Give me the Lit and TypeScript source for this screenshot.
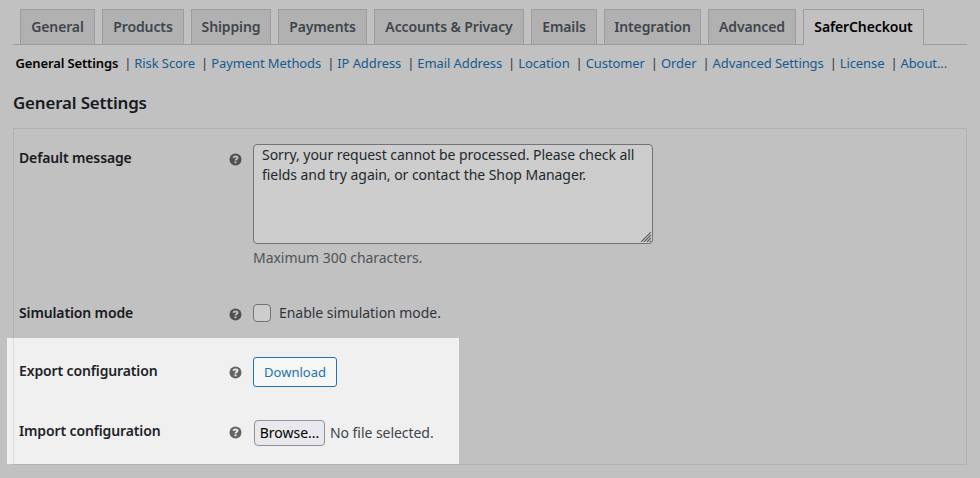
import { LitElement, html, css } from "lit";
import { customElement, property } from "lit/decorators.js";
import { classMap } from "lit/directives/class-map.js";
import { styleMap } from "lit/directives/style-map.js";

const tabs: [string, number][] = [
  ["General", 75],
  ["Products", 82],
  ["Shipping", 80],
  ["Payments", 89],
  ["Accounts & Privacy", 150],
  ["Emails", 66],
  ["Integration", 97],
  ["Advanced", 88],
  ["SaferCheckout", 121],
];

const sections = [
  "General Settings",
  "Risk Score",
  "Payment Methods",
  "IP Address",
  "Email Address",
  "Location",
  "Customer",
  "Order",
  "Advanced Settings",
  "License",
  "About...",
];

@customElement("help-tip")
class HelpTip extends LitElement {
  static styles = css`
    :host {
      display: block;
      width: 13px;
      height: 13px;
    }
    svg {
      display: block;
    }
  `;
  render() {
    return html`<svg width="13" height="13" viewBox="0 0 13 13">
      <circle cx="6.5" cy="6.5" r="6" fill="#646464" />
      <path d="M4.4 4.9C4.6 3.8 5.4 3.4 6.5 3.4C7.8 3.4 8.5 4 8.5 4.8C8.5 6 6.5 6 6.5 7.6" fill="none" stroke="#f0f0f1" stroke-width="1.9" />
      <rect x="5.5" y="8.4" width="2" height="1.8" fill="#f0f0f1" />
    </svg>`;
  }
}

@customElement("setting-row")
class SettingRow extends LitElement {
  @property() label = "";
  static styles = css`
    :host {
      display: grid;
      grid-template-columns: 210px 24px 1fr;
      align-items: start;
    }
    .label {
      font-weight: 600;
      line-height: 20px;
      letter-spacing: -0.13px;
      color: #1d2327;
      padding-top: 4px;
    }
    help-tip {
      margin-top: 9px;
    }
  `;
  render() {
    return html`<div class="label">${this.label}</div>
      <help-tip></help-tip>
      <slot></slot>`;
  }
}

@customElement("app-root")
class AppRoot extends LitElement {
  static styles = css`
    :host {
      display: block;
      position: relative;
      box-sizing: border-box;
      height: 478px;
      padding: 9px 13px 0;
      overflow: hidden;
      background: #f0f0f1;
      color: #3c434a;
      font: 14px/20px "Noto Sans", "Open Sans", sans-serif;
    }
    * {
      box-sizing: border-box;
    }
    .tabs {
      display: flex;
      gap: 7px;
      height: 36px;
      padding-left: 7px;
      border-bottom: 1px solid #c3c4c7;
    }
    .tab {
      flex: none;
      height: 35px;
      border: 1px solid #c3c4c7;
      border-bottom: 0;
      background: #dcdcde;
      color: #50575e;
      font-weight: 600;
      letter-spacing: -0.12px;
      line-height: 34px;
      text-align: center;
      white-space: nowrap;
    }
    .tab.active {
      height: 36px;
      background: #f0f0f1;
      color: #000;
    }
    .sections {
      display: flex;
      margin: 8px 0 0 2.5px;
      font-size: 13px;
      line-height: 20px;
      letter-spacing: -0.09px;
      white-space: nowrap;
    }
    .sections a {
      color: #2271b1;
    }
    .sections a.current {
      color: #000;
      font-weight: 600;
      letter-spacing: -0.13px;
    }
    .sep {
      margin: 0 3px 0 6px;
    }
    h2 {
      margin: 18px 0 0;
      color: #1d2327;
      font-size: 16.9px;
      font-weight: 600;
      letter-spacing: -0.15px;
      line-height: 24px;
    }
    .panel {
      height: 337px;
      margin-top: 13px;
      padding: 15px 5px 0;
      border: 1px solid #dcdcde;
    }
    .message {
      height: 155px;
    }
    .simulation {
      height: 58px;
    }
    .export {
      height: 60px;
    }
    .field {
      position: relative;
      width: 400px;
    }
    .grip {
      position: absolute;
      right: 2px;
      bottom: 2px;
    }
    textarea {
      display: block;
      width: 400px;
      height: 100px;
      margin: 0;
      padding: 0 8px;
      border: 1px solid #8c8f94;
      border-radius: 4px;
      background: #fff;
      color: #2c3338;
      font: inherit;
      letter-spacing: -0.05px;
      overflow: hidden;
      resize: none;
    }
    .hint {
      margin-top: 4px;
      color: #646970;
      letter-spacing: -0.04px;
    }
    .check {
      display: flex;
      align-items: center;
      gap: 8px;
      height: 28px;
      letter-spacing: -0.04px;
    }
    .box {
      width: 18px;
      height: 18px;
      border: 1px solid #8c8f94;
      border-radius: 4px;
      background: #fff;
    }
    .download {
      width: 84px;
      height: 30px;
      padding: 0;
      border: 1px solid #2271b1;
      border-radius: 3px;
      background: #f6f7f7;
      color: #2271b1;
      font: inherit;
      font-size: 13px;
    }
    .file {
      display: flex;
      align-items: center;
      gap: 5px;
      padding: 3px 0 0 1px;
      letter-spacing: -0.05px;
    }
    .browse {
      width: 71px;
      height: 26px;
      padding: 0;
      border: 1px solid #8f8f9d;
      border-radius: 4px;
      background: #e9e9ed;
      color: #000;
      font: inherit;
    }
    .spotlight {
      position: absolute;
      left: 7px;
      top: 338px;
      width: 452px;
      height: 126px;
      box-shadow: 0 0 0 1000px rgba(0, 0, 0, 0.195);
      pointer-events: none;
    }
  `;

  render() {
    return html`
      <nav class="tabs">
        ${tabs.map(
          ([name, width], i) => html`<div
            class=${classMap({ tab: true, active: i === tabs.length - 1 })}
            style=${styleMap({ width: `${width}px` })}
          >${name}</div>`
        )}
      </nav>
      <nav class="sections">
        ${sections.map(
          (name, i) => html`${i ? html`<span class="sep">|</span>` : ""}<a class=${classMap({ current: i === 0 })}>${name}</a>`
        )}
      </nav>
      <h2>General Settings</h2>
      <div class="panel">
        <setting-row class="message" label="Default message">
          <div>
            <div class="field">
              <textarea .value=${"Sorry, your request cannot be processed. Please check all fields and try again, or contact the Shop Manager."}></textarea>
              <svg class="grip" width="10" height="10" viewBox="0 0 10 10">
                <path d="M0 10L10 0M3 10L10 3M6 10L10 6M9 10L10 9" stroke="#707070" stroke-width="1.1" />
              </svg>
            </div>
            <div class="hint">Maximum 300 characters.</div>
          </div>
        </setting-row>
        <setting-row class="simulation" label="Simulation mode">
          <label class="check"><span class="box"></span>Enable simulation mode.</label>
        </setting-row>
        <setting-row class="export" label="Export configuration">
          <button class="download">Download</button>
        </setting-row>
        <setting-row label="Import configuration">
          <div class="file"><button class="browse">Browse...</button>No file selected.</div>
        </setting-row>
      </div>
      <div class="spotlight"></div>
    `;
  }
}
